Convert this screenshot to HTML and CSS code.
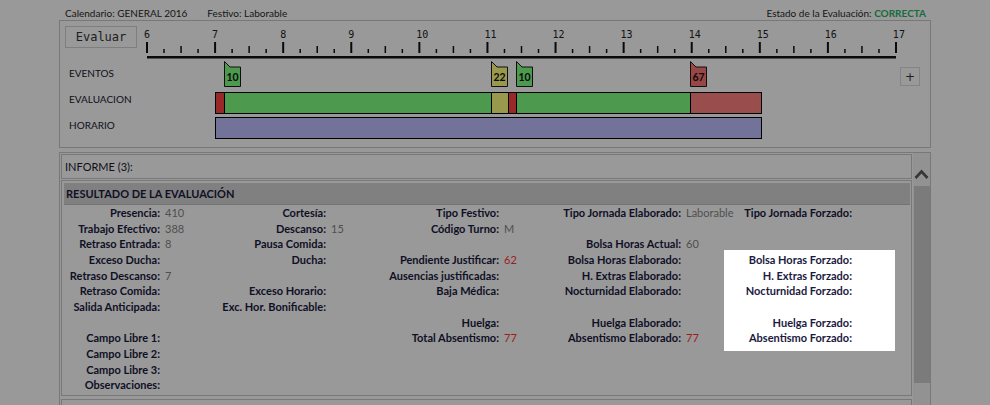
FILE: index.html
```html
<!DOCTYPE html>
<html lang="es">
<head>
<meta charset="utf-8">
<title>Evaluación</title>
<link rel="stylesheet" href="styles.css">
</head>
<body>
<div class="page">
  <header class="info">
    <span>Calendario: GENERAL 2016</span>
    <span>Festivo: Laborable</span>
    <span class="info-status">Estado de la Evaluación: <b class="ok">CORRECTA</b></span>
  </header>

  <section class="timeline">
    <div class="tl-row tl-ruler">
      <div class="tl-side"><button class="btn-eval">Evaluar</button></div>
      <div class="tl-track">
        <div class="hours">
          <span>6</span><span>7</span><span>8</span><span>9</span><span>10</span><span>11</span><span>12</span><span>13</span><span>14</span><span>15</span><span>16</span><span>17</span>
        </div>
        <svg class="ticks" width="751" height="18" viewBox="0 0 751 18">
          <path fill="#111" d="M0 1h2v11h-2z M68.09 1h2v11h-2z M136.18 1h2v11h-2z M204.27 1h2v11h-2z M272.36 1h2v11h-2z M340.45 1h2v11h-2z M408.55 1h2v11h-2z M476.64 1h2v11h-2z M544.73 1h2v11h-2z M612.82 1h2v11h-2z M680.91 1h2v11h-2z M749 1h2v11h-2z"/>
          <path fill="#111" d="M34.3 5h1.5v7h-1.5z M102.39 5h1.5v7h-1.5z M170.48 5h1.5v7h-1.5z M238.57 5h1.5v7h-1.5z M306.66 5h1.5v7h-1.5z M374.75 5h1.5v7h-1.5z M442.84 5h1.5v7h-1.5z M510.93 5h1.5v7h-1.5z M579.02 5h1.5v7h-1.5z M647.11 5h1.5v7h-1.5z M715.2 5h1.5v7h-1.5z"/>
          <path fill="#111" d="M17.27 8h1.5v4h-1.5z M51.32 8h1.5v4h-1.5z M85.36 8h1.5v4h-1.5z M119.41 8h1.5v4h-1.5z M153.45 8h1.5v4h-1.5z M187.5 8h1.5v4h-1.5z M221.55 8h1.5v4h-1.5z M255.59 8h1.5v4h-1.5z M289.64 8h1.5v4h-1.5z M323.68 8h1.5v4h-1.5z M357.73 8h1.5v4h-1.5z M391.77 8h1.5v4h-1.5z M425.82 8h1.5v4h-1.5z M459.86 8h1.5v4h-1.5z M493.91 8h1.5v4h-1.5z M527.95 8h1.5v4h-1.5z M562 8h1.5v4h-1.5z M596.05 8h1.5v4h-1.5z M630.09 8h1.5v4h-1.5z M664.14 8h1.5v4h-1.5z M698.18 8h1.5v4h-1.5z M732.23 8h1.5v4h-1.5z"/>
          <rect x="1" y="15" width="749" height="2.5" fill="#111"/>
        </svg>
      </div>
    </div>

    <div class="tl-row tl-events">
      <div class="tl-side"><span class="tl-label">EVENTOS</span></div>
      <div class="tl-track">
        <svg class="flag flag-green" style="left:78px" width="18" height="26" viewBox="0 0 18 26"><polygon points="0.5,0.5 6,6 16.5,6 16.5,25.5 0.5,25.5"/><text x="8.5" y="19.5">10</text></svg>
        <svg class="flag flag-olive" style="left:345px" width="18" height="26" viewBox="0 0 18 26"><polygon points="0.5,0.5 6,6 16.5,6 16.5,25.5 0.5,25.5"/><text x="8.5" y="19.5">22</text></svg>
        <svg class="flag flag-green" style="left:370px" width="18" height="26" viewBox="0 0 18 26"><polygon points="0.5,0.5 6,6 16.5,6 16.5,25.5 0.5,25.5"/><text x="8.5" y="19.5">10</text></svg>
        <svg class="flag flag-red" style="left:544px" width="18" height="26" viewBox="0 0 18 26"><polygon points="0.5,0.5 6,6 16.5,6 16.5,25.5 0.5,25.5"/><text x="8.5" y="19.5">67</text></svg>
      </div>
      <button class="btn-add">+</button>
    </div>

    <div class="tl-row tl-eval">
      <div class="tl-side"><span class="tl-label">EVALUACION</span></div>
      <div class="tl-track">
        <div class="bar" style="left:69px;width:547px">
          <span class="seg seg-red" style="width:8px"></span>
          <span class="seg seg-green" style="width:267px"></span>
          <span class="seg seg-olive" style="width:17px"></span>
          <span class="seg seg-red" style="width:8px"></span>
          <span class="seg seg-green" style="width:174px"></span>
          <span class="seg seg-light-red" style="width:71px"></span>
        </div>
      </div>
    </div>

    <div class="tl-row tl-horario">
      <div class="tl-side"><span class="tl-label">HORARIO</span></div>
      <div class="tl-track">
        <div class="bar" style="left:69px;width:547px">
          <span class="seg seg-purple" style="width:545px"></span>
        </div>
      </div>
    </div>
  </section>

  <section class="report">
    <div class="report-body">
      <div class="box informe">INFORME (3):</div>
      <div class="box resultado">
        <h2 class="res-title">RESULTADO DE LA EVALUACIÓN</h2>
        <div class="grid">
          <span class="k c1">Presencia:</span><span class="v">410</span>
          <span class="k c3">Cortesía:</span>
          <span class="k c5">Tipo Festivo:</span>
          <span class="k c7">Tipo Jornada Elaborado:</span><span class="v">Laborable</span>
          <span class="k c9">Tipo Jornada Forzado:</span>

          <span class="k c1">Trabajo Efectivo:</span><span class="v">388</span>
          <span class="k c3">Descanso:</span><span class="v">15</span>
          <span class="k c5">Código Turno:</span><span class="v">M</span>

          <span class="k c1">Retraso Entrada:</span><span class="v">8</span>
          <span class="k c3">Pausa Comida:</span>
          <span class="k c7">Bolsa Horas Actual:</span><span class="v">60</span>

          <span class="k c1">Exceso Ducha:</span>
          <span class="k c3">Ducha:</span>
          <span class="k c5">Pendiente Justificar:</span><span class="v red">62</span>
          <span class="k c7">Bolsa Horas Elaborado:</span>
          <span class="k c9">Bolsa Horas Forzado:</span>

          <span class="k c1">Retraso Descanso:</span><span class="v">7</span>
          <span class="k c5">Ausencias justificadas:</span>
          <span class="k c7">H. Extras Elaborado:</span>
          <span class="k c9">H. Extras Forzado:</span>

          <span class="k c1">Retraso Comida:</span>
          <span class="k c3">Exceso Horario:</span>
          <span class="k c5">Baja Médica:</span>
          <span class="k c7">Nocturnidad Elaborado:</span>
          <span class="k c9">Nocturnidad Forzado:</span>

          <span class="k c1">Salida Anticipada:</span>
          <span class="k c3">Exc. Hor. Bonificable:</span>

          <span class="k c1"></span>
          <span class="k c5">Huelga:</span>
          <span class="k c7">Huelga Elaborado:</span>
          <span class="k c9">Huelga Forzado:</span>

          <span class="k c1">Campo Libre 1:</span>
          <span class="k c5">Total Absentismo:</span><span class="v red">77</span>
          <span class="k c7">Absentismo Elaborado:</span><span class="v red">77</span>
          <span class="k c9">Absentismo Forzado:</span>

          <span class="k c1">Campo Libre 2:</span>
          <span class="k c1">Campo Libre 3:</span>
          <span class="k c1">Observaciones:</span>
        </div>
      </div>
      <div class="box next"></div>
    </div>
    <div class="scrollbar">
      <svg class="sb-up" width="17" height="33" viewBox="0 0 17 33"><polyline points="2.5,25 8.5,18.5 14.5,25" fill="none" stroke="#5c5c5c" stroke-width="2.6"/></svg>
      <div class="sb-thumb"></div>
    </div>
  </section>
</div>
<div class="spotlight"></div>
</body>
</html>
```
FILE: styles.css
```css
* { box-sizing: border-box; margin: 0; padding: 0; }
html, body { width: 990px; height: 405px; overflow: hidden; background: #fff; }
body {
  position: relative;
  font-family: "Lato", "Open Sans", sans-serif;
  color: #1a1a40;
}

.page { margin-left: 59px; width: 872px; }

/* top info line */
.info {
  display: flex;
  gap: 20px;
  height: 20px;
  padding: 7px 5px 0 6px;
  font-size: 10px;
  line-height: 13px;
  color: #2a2a2a;
}
.info-status { margin-left: auto; }
.ok { color: #27b368; font-weight: 700; }

/* timeline panel */
.timeline { height: 128px; border: 1px solid #c8c8c8; }
.tl-row { display: flex; }
.tl-side { width: 86px; flex: none; }
.tl-track { width: 751px; flex: none; position: relative; }
.tl-label { display: block; padding-left: 9px; font-size: 10px; line-height: 14px; color: #1a1a30; }

.tl-ruler { height: 38px; }
.tl-ruler .tl-side { padding: 5px 0 0 5px; }
.btn-eval {
  display: block;
  width: 72px;
  height: 22px;
  border: 1px solid #d2d2d2;
  background: #fff;
  font: 12px/20px "DejaVu Sans Mono", monospace;
  color: #333;
}
.hours {
  display: flex;
  height: 20px;
  margin-left: -2px;
  padding-top: 8px;
  font: 10px/12px "DejaVu Sans Mono", monospace;
  color: #222;
}
.hours span { flex: none; width: 68.09px; }
.ticks { display: block; }

.tl-events { height: 31px; }
.tl-events .tl-label { padding-top: 7px; }
.tl-eval { height: 25px; }
.tl-eval .tl-label { padding-top: 2px; }
.tl-horario { height: 25px; }
.tl-horario .tl-label { padding-top: 3px; }

.flag { position: absolute; top: 2px; overflow: visible; }
.flag polygon { stroke: #1a1a1a; stroke-width: 1; }
.flag text {
  font: 700 10.5px "Lato", sans-serif;
  fill: #111;
  text-anchor: middle;
}
.flag-green polygon { fill: #80ff80; }
.flag-olive polygon { fill: #ffff80; }
.flag-red polygon { fill: #ff7575; }

.btn-add {
  flex: none;
  width: 20px;
  height: 19px;
  margin: 8px 0 0 3px;
  border: 1px solid #dcdcdc;
  background: #fff;
  font: 12px/16px "DejaVu Sans", sans-serif;
  color: #333;
}

.bar {
  position: absolute;
  top: 2px;
  height: 22px;
  display: flex;
  border: 1px solid #000;
}
.seg { flex: none; height: 100%; }
.seg + .seg { border-left: 1px solid #000; }
.seg-red { background: #ff4444; }
.seg-green { background: #80ff80; }
.seg-olive { background: #ffff80; }
.seg-light-red { background: #ff8080; }
.seg-purple { background: #c0c0ff; }

/* report panel */
.report {
  display: flex;
  height: 253px;
  margin-top: 4px;
  border: 1px solid #c8c8c8;
  border-bottom-width: 0;
  overflow: hidden;
}
.report-body { width: 853px; flex: none; padding: 1px; }
.box { border: 1px solid #c8c8c8; }
.informe {
  height: 25px;
  padding-left: 3px;
  font-size: 11px;
  line-height: 23px;
  color: #1a1a30;
}
.resultado {
  height: 216px;
  margin-top: 1px;
  padding: 2px 1px 0 2px;
}
.res-title {
  height: 22px;
  padding-left: 2px;
  background: #d6d6d6;
  border-bottom: 1px solid #c0c0c0;
  font-size: 11px;
  font-weight: 700;
  line-height: 21px;
  color: #1a1a40;
}
.grid {
  display: grid;
  grid-template-columns: 101px 50px 116px 54px 119px 51px 131px 54px 117px 52px;
  grid-auto-rows: 15.67px;
  font-size: 11px;
  line-height: 15.67px;
  white-space: nowrap;
}
.k { font-weight: 700; text-align: right; padding-right: 5px; color: #1a1a40; }
.v { color: #858585; }
.v.red { color: #ff3535; }
.c1 { grid-column: 1; }
.c3 { grid-column: 3; }
.c5 { grid-column: 5; }
.c7 { grid-column: 7; }
.c9 { grid-column: 9; }
.next { height: 6px; margin-top: 3px; border-bottom-width: 0; }

.scrollbar { width: 17px; flex: none; background: #f4f4f4; }
.sb-up { display: block; }
.sb-thumb { width: 16px; height: 197px; margin-left: 1px; background: #cdcdcd; }

/* highlight of the "Forzado" block, everything else dimmed */
.spotlight {
  position: absolute;
  left: 724px;
  top: 250px;
  width: 171px;
  height: 101px;
  box-shadow: 0 0 0 2000px rgba(0, 0, 0, 0.4);
  pointer-events: none;
  z-index: 10;
}
```
